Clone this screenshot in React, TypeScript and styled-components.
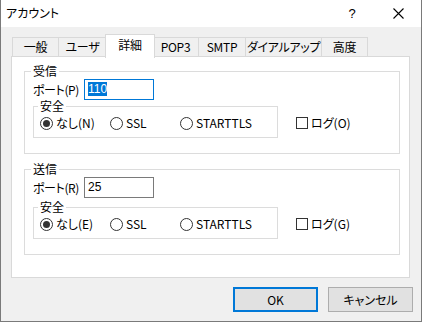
import styled, {createGlobalStyle} from "styled-components";

const GlobalStyle = createGlobalStyle`
  html, body {
    margin: 0;
    padding: 0;
    background: #ffffff;
  }
  body {
    font-family: "Noto Sans CJK JP", "Noto Sans", sans-serif;
    font-size: 12px;
    font-feature-settings: "palt";
    color: #000;
  }
`;

const Window = styled.div`
  width: 420px;
  height: 321px;
  border: 1px solid #7a7a7a;
  border-top: none;
  background: #f0f0f0;
  box-shadow: 1px 1px 2px rgba(0, 0, 0, 0.25);
  display: flex;
  flex-direction: column;
`;

const TitleBar = styled.div`
  height: 27px;
  background: #ffffff;
  display: flex;
  align-items: center;
  padding-left: 5px;
`;

const Title = styled.div`
  flex: 1;
  line-height: 14px;
  padding-bottom: 1px;
`;

const TitleButton = styled.div<{ $w: number }>`
  width: ${(p) => p.$w}px;
  display: flex;
  justify-content: center;
  align-items: center;
  font-family: "Liberation Sans", sans-serif;
  font-size: 13px;
`;

const Body = styled.div`
  padding: 7px 0 0 9px;
  display: flex;
  flex-direction: column;
`;

const TabStrip = styled.div`
  display: flex;
  align-items: flex-end;
  height: 23px;
  padding-left: 2px;
  position: relative;
  z-index: 1;
`;

const Tab = styled.div<{ $w: number; $active?: boolean; $first?: boolean }>`
  box-sizing: border-box;
  width: ${(p) => (p.$active ? p.$w + 4 : p.$w)}px;
  margin: 0 ${(p) => (p.$active ? "-2px" : "0")};
  height: ${(p) => (p.$active ? 24 : 20)}px;
  margin-bottom: ${(p) => (p.$active ? "-1px" : "0")};
  background: ${(p) => (p.$active ? "#ffffff" : "#f0f0f0")};
  border: 1px solid #d9d9d9;
  border-bottom: ${(p) => (p.$active ? "none" : "1px solid #d9d9d9")};
  border-left: ${(p) => (p.$first || p.$active ? "1px solid #d9d9d9" : "none")};
  display: flex;
  justify-content: center;
  align-items: flex-start;
  padding-top: ${(p) => (p.$active ? 3 : 2)}px;
  line-height: 14px;
  white-space: nowrap;
  letter-spacing: -0.3px;
  z-index: ${(p) => (p.$active ? 2 : 0)};
`;

const Panel = styled.div`
  box-sizing: border-box;
  width: 399px;
  height: 222px;
  margin-left: 1px;
  margin-top: -1px;
  background: #ffffff;
  border: 1px solid #d9d9d9;
  padding: 7px 9px 0 12px;
  display: flex;
  flex-direction: column;
  gap: 8px;
`;

const Group = styled.fieldset<{ $pb: number }>`
  margin: 0;
  border: 1px solid #dcdcdc;
  padding: 1px 8px ${(p) => p.$pb}px 8px;
  min-width: 0;
`;

const Legend = styled.legend`
  padding: 0 2px;
  margin-left: -2px;
  line-height: 14px;
`;

const PortRow = styled.div`
  display: flex;
  align-items: center;
  height: 21px;
`;

const PortLabel = styled.div`
  width: 51px;
  line-height: 14px;
  letter-spacing: -0.4px;
`;

const TextBox = styled.div<{ $focused?: boolean }>`
  box-sizing: border-box;
  width: 70px;
  height: 21px;
  border: 1px solid ${(p) => (p.$focused ? "#0078d7" : "#7a7a7a")};
  background: #ffffff;
  padding: 2px 0 0 3px;
  line-height: 15px;
  font-family: "Liberation Sans", sans-serif;
  font-size: 12px;
`;

const Selected = styled.span`
  background: #0078d7;
  color: #ffffff;
`;

const SecurityRow = styled.div<{ $mt: number }>`
  display: flex;
  margin-top: ${(p) => p.$mt}px;
`;

const SubGroup = styled.fieldset`
  margin: 0;
  box-sizing: border-box;
  width: 245px;
  border: 1px solid #dcdcdc;
  padding: 3px 0 7px 6px;
  display: flex;
`;

const RadioItem = styled.label<{ $w?: number }>`
  display: flex;
  align-items: center;
  gap: 3px;
  width: ${(p) => (p.$w ? `${p.$w}px` : "auto")};
  line-height: 14px;
`;

const RadioCircle = styled.span<{ $checked?: boolean }>`
  box-sizing: border-box;
  width: 13px;
  height: 13px;
  border-radius: 50%;
  border: 1px solid #333333;
  background: #ffffff;
  display: flex;
  align-items: center;
  justify-content: center;

  &::after {
    content: "";
    width: 7px;
    height: 7px;
    border-radius: 50%;
    background: #333333;
    display: ${(p) => (p.$checked ? "block" : "none")};
  }
`;

const CheckItem = styled.label`
  display: flex;
  align-items: center;
  gap: 3px;
  margin-left: 18px;
  align-self: flex-end;
  margin-bottom: 8px;
  line-height: 14px;
`;

const CheckBox = styled.span`
  box-sizing: border-box;
  width: 12px;
  height: 12px;
  border: 1px solid #333333;
  background: #ffffff;
`;

const ButtonRow = styled.div`
  display: flex;
  justify-content: flex-end;
  gap: 10px;
  padding: 9px 8px 0 0;
`;

const Button = styled.div<{ $default?: boolean }>`
  box-sizing: border-box;
  width: 85px;
  height: 25px;
  background: #e1e1e1;
  border: ${(p) => (p.$default ? "2px solid #0078d7" : "1px solid #adadad")};
  display: flex;
  align-items: center;
  justify-content: center;
  line-height: 14px;
`;

const tabs = [
  {label: "一般", w: 47},
  {label: "ユーザ", w: 48},
  {label: "詳細", w: 46, active: true},
  {label: "POP3", w: 46},
  {label: "SMTP", w: 47},
  {label: "ダイアルアップ", w: 76},
  {label: "高度", w: 46},
];

type ServerProps = {
  title: string;
  portKey: string;
  port: string;
  focused?: boolean;
  noneKey: string;
  logKey: string;
  mt: number;
};

const ServerGroup = ({title, portKey, port, focused, noneKey, logKey, mt}: ServerProps) => (
  <Group $pb={15}>
    <Legend>{title}</Legend>
    <PortRow>
      <PortLabel>ポート({portKey})</PortLabel>
      <TextBox $focused={focused}>
        {focused ? <Selected>{port}</Selected> : port}
      </TextBox>
    </PortRow>
    <SecurityRow $mt={mt}>
      <SubGroup>
        <Legend>安全</Legend>
        <RadioItem $w={70}>
          <RadioCircle $checked />
          なし({noneKey})
        </RadioItem>
        <RadioItem $w={70}>
          <RadioCircle />
          SSL
        </RadioItem>
        <RadioItem>
          <RadioCircle />
          STARTTLS
        </RadioItem>
      </SubGroup>
      <CheckItem>
        <CheckBox />
        ログ({logKey})
      </CheckItem>
    </SecurityRow>
  </Group>
);

export default function App() {
  return (
    <>
      <GlobalStyle />
      <Window>
        <TitleBar>
          <Title>アカウント</Title>
          <TitleButton $w={46}>?</TitleButton>
          <TitleButton $w={46}>
            <svg width="11" height="11" viewBox="0 0 11 11">
              <path d="M0.5 0.5 L10.5 10.5 M10.5 0.5 L0.5 10.5" stroke="#000" strokeWidth="1.1" />
            </svg>
          </TitleButton>
        </TitleBar>
        <Body>
          <TabStrip>
            {tabs.map((t, i) => (
              <Tab key={t.label} $w={t.w} $active={t.active} $first={i === 0}>
                {t.label}
              </Tab>
            ))}
          </TabStrip>
          <Panel>
            <ServerGroup title="受信" portKey="P" port="110" focused noneKey="N" logKey="O" mt={-1} />
            <ServerGroup title="送信" portKey="R" port="25" noneKey="E" logKey="G" mt={2} />
          </Panel>
          <ButtonRow>
            <Button $default>OK</Button>
            <Button>キャンセル</Button>
          </ButtonRow>
        </Body>
      </Window>
    </>
  );
}
